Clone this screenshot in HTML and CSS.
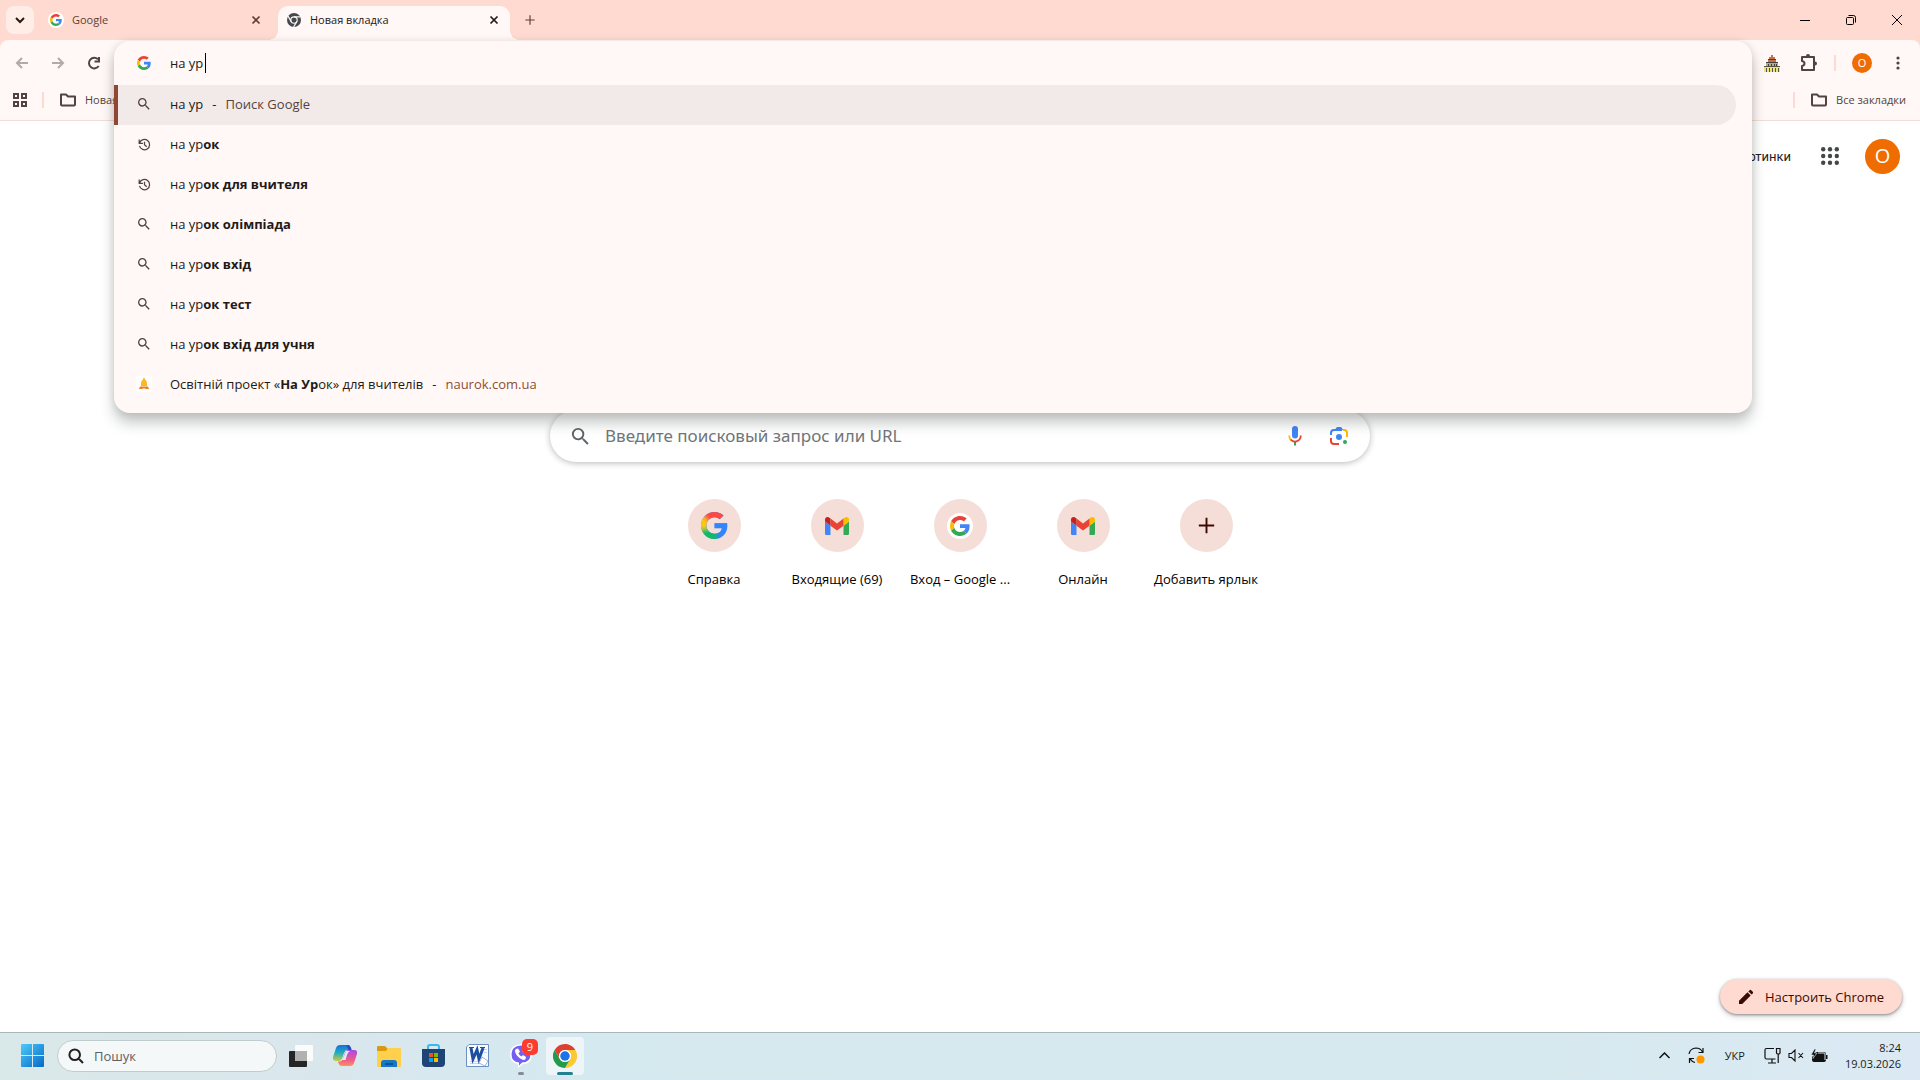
FILE: index.html
```
<!DOCTYPE html>
<html lang="ru">
<head>
<meta charset="utf-8">
<title>Новая вкладка</title>
<link rel="stylesheet" href="styles.css">
</head>
<body>
<svg class="sprite" aria-hidden="true">
  <defs>
    <symbol id="g" viewBox="0 0 48 48">
      <path fill="#EA4335" d="M24 9.5c3.54 0 6.71 1.22 9.21 3.6l6.85-6.85C35.9 2.38 30.47 0 24 0 14.62 0 6.51 5.38 2.56 13.22l7.98 6.19C12.43 13.72 17.74 9.5 24 9.5z"/>
      <path fill="#4285F4" d="M46.98 24.55c0-1.57-.15-3.09-.38-4.55H24v9.02h12.94c-.58 2.96-2.26 5.48-4.78 7.18l7.73 6c4.51-4.18 7.09-10.36 7.09-17.65z"/>
      <path fill="#FBBC05" d="M10.53 28.59c-.48-1.45-.76-2.99-.76-4.59s.27-3.14.76-4.59l-7.98-6.19C.92 16.46 0 20.12 0 24c0 3.88.92 7.54 2.56 10.78l7.97-6.19z"/>
      <path fill="#34A853" d="M24 48c6.48 0 11.93-2.13 15.89-5.81l-7.73-6c-2.15 1.45-4.92 2.3-8.16 2.3-6.26 0-11.57-4.22-13.47-9.91l-7.98 6.19C6.51 42.62 14.62 48 24 48z"/>
    </symbol>
    <clipPath id="g-shape">
      <path d="M24 9.5c3.54 0 6.71 1.22 9.21 3.6l6.85-6.85C35.9 2.38 30.47 0 24 0 10.7 0 0 10.7 0 24s10.7 24 24 24c13.5 0 22.98-9.6 22.98-23.45 0-1.57-.15-3.09-.38-4.55H24v9.02h12.94c-1.2 5.9-6.2 9.47-12.94 9.47-8 0-14.23-6.5-14.23-14.49S16 9.5 24 9.5z"/>
    </clipPath>
    <filter id="soft" x="-20%" y="-20%" width="140%" height="140%"><feGaussianBlur stdDeviation="3.5"/></filter>
    <symbol id="g-new" viewBox="0 0 48 48">
      <g clip-path="url(#g-shape)">
        <rect width="48" height="48" fill="#3186ff"/>
        <g filter="url(#soft)">
          <path fill="#ff4641" d="M-6-6h60v24H14L-6 14z"/>
          <path fill="#ffcc00" d="M-6 10l13-2 10 16-6 6-17 2z"/>
          <path fill="#0ebc5f" d="M-6 32l16-4 14 4 8 22H-6z"/>
        </g>
        <path fill="#3186ff" d="M24 20h24v9H24z"/>
      </g>
    </symbol>
    <symbol id="search" viewBox="0 0 24 24"><path fill="currentColor" d="M15.5 14h-.79l-.28-.27A6.47 6.47 0 0 0 16 9.5 6.5 6.5 0 1 0 9.5 16c1.61 0 3.09-.59 4.23-1.57l.27.28v.79l5 4.99L20.49 19l-4.99-5zm-6 0C7.01 14 5 11.99 5 9.5S7.01 5 9.5 5 14 7.01 14 9.5 11.99 14 9.5 14z"/></symbol>
    <symbol id="history" viewBox="0 0 24 24"><path fill="none" stroke="currentColor" stroke-width="2" d="M4.2 9.5A8.2 8.2 0 1 1 4 14.300M12 7.500v5l3.500 3.200M3.500 4v6h6"/></symbol>
    <symbol id="close" viewBox="0 0 16 16"><path fill="none" stroke="currentColor" stroke-width="2" d="M4 4l8 8M12 4l-8 8"/></symbol>
    <symbol id="plus" viewBox="0 0 24 24"><path fill="none" stroke="currentColor" stroke-width="2" d="M12 4v16M4 12h16"/></symbol>
    <symbol id="arrow" viewBox="0 0 16 16"><path fill="none" stroke="currentColor" stroke-width="2" d="M14 8H3M8 3L3 8l5 5"/></symbol>
    <symbol id="folder" viewBox="0 0 16 14"><path fill="none" stroke="currentColor" stroke-width="2" stroke-linejoin="round" d="M1 11.500v-10h5l2 2h7v8q0 1-1 1H2q-1 0-1-1z"/></symbol>
    <symbol id="gmail" viewBox="0 0 24 18">
      <path fill="#4285F4" d="M1.600 18H5.500V8.700L0 4.500v11.900C0 17.300.7 18 1.600 18z"/>
      <path fill="#34A853" d="M18.500 18h3.900c.9 0 1.600-.7 1.600-1.600V4.500l-5.500 4.200z"/>
      <path fill="#FBBC04" d="M18.500 1.600v7.100L24 4.600V2.500c0-2-2.300-3.200-3.900-2z"/>
      <path fill="#EA4335" d="M5.500 8.700V1.600L12 6.500l6.500-4.900v7.100L12 13.600z"/>
      <path fill="#C5221F" d="M0 2.500v2.100l5.500 4.100V1.600L3.900.5C2.300-.7 0 .5 0 2.500z"/>
    </symbol>
  </defs>
</svg>

<header class="tabstrip">
  <button class="tab-search" aria-label="Поиск вкладок"><svg width="12" height="12" viewBox="0 0 12 12"><path fill="none" stroke="currentColor" stroke-width="2" d="M2 4l4 4 4-4"/></svg></button>
  <div class="tab">
    <span class="favicon"><svg width="12" height="12"><use href="#g"/></svg></span>
    <span class="tab-title">Google</span>
    <button class="tab-close" aria-label="Закрыть"><svg width="14" height="14"><use href="#close"/></svg></button>
  </div>
  <div class="tab active">
    <span class="favicon plain"><svg width="14" height="14" viewBox="0 0 24 24"><circle cx="12" cy="12" r="12" fill="#45494d"/><g fill="none" stroke="#fff8f6" stroke-width="2"><circle cx="12" cy="12" r="5.500"/><path d="M12 6.500h11M7.200 14.800L1.800 5.400M16.800 14.800L11.300 24"/></g></svg></span>
    <span class="tab-title">Новая вкладка</span>
    <button class="tab-close" aria-label="Закрыть"><svg width="14" height="14"><use href="#close"/></svg></button>
  </div>
  <button class="new-tab" aria-label="Новая вкладка"><svg width="14" height="14"><use href="#plus"/></svg></button>
  <div class="window-buttons">
    <button aria-label="Свернуть"><svg width="10" height="10" viewBox="0 0 10 10"><path stroke="#000" d="M0 5.500h10"/></svg></button>
    <button aria-label="Свернуть в окно"><svg width="10" height="10" viewBox="0 0 10 10"><path fill="none" stroke="#000" d="M.5 3.500q0-1 1-1h5q1 0 1 1v5q0 1-1 1h-5q-1 0-1-1zM2.500.5h5q2 0 2 2v5"/></svg></button>
    <button aria-label="Закрыть окно"><svg width="10" height="10" viewBox="0 0 10 10"><path stroke="#000" d="M0 0l10 10M10 0L0 10"/></svg></button>
  </div>
</header>

<div class="chrome">
  <nav class="toolbar">
    <button class="tool muted" aria-label="Назад"><svg width="16" height="16"><use href="#arrow"/></svg></button>
    <button class="tool muted flip" aria-label="Вперёд"><svg width="16" height="16"><use href="#arrow"/></svg></button>
    <button class="tool" aria-label="Обновить"><svg width="16" height="16" viewBox="0 0 16 16"><path fill="none" stroke="currentColor" stroke-width="2" d="M12.700 11A5.300 5.300 0 1 1 12 4.300M13 2v4.500H8.500"/></svg></button>
    <span class="spacer"></span>
    <button class="tool" aria-label="Расширение"><svg width="16" height="17" viewBox="0 0 16 17"><path fill="#f2e27a" d="M0 11h16v6H0z"/><path fill="#554" d="M0 11h16v1H0zM2 13h1v4H2zM5 13h1v4H5zM8 13h1v4H8zM11 13h1v4h-1zM14 13h1v4h-1z"/><path fill="#b9a98f" d="M2 7h12v4H2z"/><path fill="#443e3a" d="M2 7h12v1H2zM4 9h1v2H4zM7 9h1v2H7zM10 9h1v2h-1zM12 9h1v2h-1zM4 4h8v1H4z"/><path fill="#c86f4b" d="M4 5h8v2H4zM5 2h6v2H5zM7 0h2v2H7z"/></svg></button>
    <button class="tool" aria-label="Расширения"><svg width="18" height="18" viewBox="0 0 18 18"><path fill="none" stroke="currentColor" stroke-width="2" stroke-linejoin="round" d="M3 3h12v13H3v-4q2.500-.5 2.500-2.500T3 7z"/><path fill="currentColor" d="M7 2q0-2 2-2t2 2zM16 7.500q2 0 2 2t-2 2z"/></svg></button>
    <span class="divider"></span>
    <button class="tool" aria-label="Профиль"><span class="profile">О</span></button>
    <button class="tool" aria-label="Меню"><svg width="4" height="14" viewBox="0 0 4 14" fill="currentColor"><circle cx="2" cy="2" r="1.600"/><circle cx="2" cy="7" r="1.600"/><circle cx="2" cy="12" r="1.600"/></svg></button>
  </nav>
  <nav class="bookmarks">
    <button class="apps" aria-label="Группы вкладок"><svg width="14" height="14" viewBox="0 0 14 14" fill="none" stroke="currentColor" stroke-width="2"><path d="M1 1h4v4H1zM9 1h4v4H9zM1 9h4v4H1zM9 9h4v4H9z"/></svg></button>
    <span class="divider"></span>
    <a class="bookmark" href="#"><svg width="16" height="14"><use href="#folder"/></svg>Новая папка</a>
    <span class="spacer"></span>
    <span class="divider"></span>
    <a class="bookmark" href="#"><svg width="16" height="14"><use href="#folder"/></svg>Все закладки</a>
  </nav>
</div>

<section class="omnibox" aria-label="Адресная строка">
  <div class="omnibox-input">
    <span class="row-icon"><svg width="14" height="14"><use href="#g"/></svg></span>
    <input class="query" type="text" value="на ур" size="4" aria-label="Адрес или запрос">
  </div>
  <ul class="suggestions">
    <li class="selected"><span class="row-icon"><svg width="16" height="16"><use href="#search"/></svg></span><span>на ур<span class="dash">-</span><span class="hint">Поиск Google</span></span></li>
    <li><span class="row-icon"><svg width="15" height="15"><use href="#history"/></svg></span><span>на ур<b>ок</b></span></li>
    <li><span class="row-icon"><svg width="15" height="15"><use href="#history"/></svg></span><span>на ур<b>ок для вчителя</b></span></li>
    <li><span class="row-icon"><svg width="16" height="16"><use href="#search"/></svg></span><span>на ур<b>ок олімпіада</b></span></li>
    <li><span class="row-icon"><svg width="16" height="16"><use href="#search"/></svg></span><span>на ур<b>ок вхід</b></span></li>
    <li><span class="row-icon"><svg width="16" height="16"><use href="#search"/></svg></span><span>на ур<b>ок тест</b></span></li>
    <li><span class="row-icon"><svg width="16" height="16"><use href="#search"/></svg></span><span>на ур<b>ок вхід для учня</b></span></li>
    <li><span class="row-icon"><span class="site-icon"><svg width="10" height="12" viewBox="0 0 10 12"><path fill="#fbb823" d="M5 0q1 0 1.200 1.500Q8 3 8 6.500V8H2V6.500Q2 3 3.800 1.500 4 0 5 0z"/><path fill="#f07c1b" d="M1 8.500h8l1 2.500H7q-2-1.500-4 0H0z"/></svg></span></span><span>Освітній проект «<b>На Ур</b>ок» для вчителів<span class="dash">-</span><span class="url">naurok.com.ua</span></span></li>
  </ul>
</section>

<main class="ntp">
  <div class="ntp-header">
    <a class="images-link" href="#">Картинки</a>
    <button class="grid-button" aria-label="Приложения Google"><svg width="18" height="18" viewBox="0 0 18 18" fill="#444746"><circle cx="2.200" cy="2.200" r="2.200"/><circle cx="9" cy="2.200" r="2.200"/><circle cx="15.800" cy="2.200" r="2.200"/><circle cx="2.200" cy="9" r="2.200"/><circle cx="9" cy="9" r="2.200"/><circle cx="15.800" cy="9" r="2.200"/><circle cx="2.200" cy="15.800" r="2.200"/><circle cx="9" cy="15.800" r="2.200"/><circle cx="15.800" cy="15.800" r="2.200"/></svg></button>
    <button class="account" aria-label="Аккаунт">О</button>
  </div>
  <form class="searchbox">
    <svg class="lens" width="23" height="23"><use href="#search"/></svg>
    <input type="text" placeholder="Введите поисковый запрос или URL" aria-label="Поиск">
    <button type="button" aria-label="Голосовой поиск"><svg width="14" height="20" viewBox="0 0 14 20"><rect x="4" y="0" width="6" height="12.500" rx="3" fill="#4285f4"/><path fill="#34a853" d="M6 15h2v4.500H6z"/><path fill="none" stroke="#fbbc04" stroke-width="1.800" d="M1.200 9.500q0 3 2 4.600"/><path fill="none" stroke="#ea4335" stroke-width="1.800" d="M2.600 13.600q4.400 4.200 8.800 0Q12.800 12 12.800 9.500"/></svg></button>
    <button type="button" aria-label="Поиск по картинке"><svg width="18" height="18" viewBox="0 0 18 18" fill="none" stroke-width="2"><path stroke="#4285f4" d="M1 8V6q0-3 3-3h8"/><path fill="#4285f4" d="M5 3q1-3 2.500-3h3Q12 0 13 3z"/><path stroke="#fbbc04" d="M13 3h1q3 0 3 3v4"/><path stroke="#ea4335" d="M1 11v3q0 3 3 3h5"/><circle cx="9" cy="10" r="3" fill="#4285f4"/><circle cx="15" cy="15" r="2" fill="#34a853"/></svg></button>
  </form>
  <div class="shortcuts">
    <a class="shortcut" href="#"><span class="disc"><svg width="27" height="27"><use href="#g-new"/></svg></span><span class="label">Справка</span></a>
    <a class="shortcut" href="#"><span class="disc"><svg width="24" height="18"><use href="#gmail"/></svg></span><span class="label">Входящие (69)</span></a>
    <a class="shortcut" href="#"><span class="disc"><span class="white-disc"><svg width="20" height="20"><use href="#g"/></svg></span></span><span class="label">Вход – Google ...</span></a>
    <a class="shortcut" href="#"><span class="disc"><svg width="24" height="18"><use href="#gmail"/></svg></span><span class="label">Онлайн</span></a>
    <button class="shortcut"><span class="disc"><svg width="23" height="23"><use href="#plus"/></svg></span><span class="label">Добавить ярлык</span></button>
  </div>
  <button class="customize"><svg width="16" height="16" viewBox="0 0 16 16" fill="currentColor"><path d="M1 15v-3.200l8.500-8.500 3.200 3.200L4.200 15zM10.400 2.400l1.200-1.200q.8-.7 1.600 0l1.600 1.600q.7.800 0 1.600l-1.200 1.200z"/></svg>Настроить Chrome</button>
</main>

<footer class="taskbar">
  <button class="start" aria-label="Пуск"><svg width="23" height="23" viewBox="0 0 23 23"><defs><linearGradient id="win" x1="0" y1="0" x2="1" y2="1"><stop offset="0" stop-color="#4ccbfa"/><stop offset="1" stop-color="#0669c8"/></linearGradient></defs><path fill="url(#win)" d="M1 0h10v11H0V1q0-1 1-1zM12 0h10q1 0 1 1v10H12zM0 12h11v11H1q-1 0-1-1zM12 12h11v10q0 1-1 1H12z"/></svg></button>
  <label class="task-search"><svg width="16" height="16" viewBox="0 0 16 16"><path fill="none" stroke="#222" stroke-width="2" d="M10.800 10.800L15 15M12 6.800a5.300 5.300 0 1 1-10.600 0 5.300 5.300 0 0 1 10.600 0z"/></svg><input type="text" placeholder="Пошук" aria-label="Пошук"></label>
  <div class="task-apps">
    <button aria-label="Подання завдань"><svg width="24" height="22" viewBox="0 0 24 22"><rect y="6" width="18" height="16" rx="1" fill="#262626"/><rect x="6" width="18" height="16" rx="1" fill="#fbfbfb"/><path fill="#b1b1b1" d="M6 6h12v10H6z"/></svg></button>
    <button aria-label="Copilot"><svg width="24" height="23" viewBox="0 0 24 23"><defs><linearGradient id="cp1" x1="0" y1="0" x2="0" y2="1"><stop offset="0" stop-color="#1672dc"/><stop offset=".5" stop-color="#25aebc"/><stop offset="1" stop-color="#c9cc3c"/></linearGradient><linearGradient id="cp2" x1="0" y1="0" x2="0" y2="1"><stop offset="0" stop-color="#a84be4"/><stop offset=".6" stop-color="#ec5a92"/><stop offset="1" stop-color="#fb9352"/></linearGradient></defs><path fill="url(#cp1)" d="M7 1h8q2 0 3 3l.500 2H14q-2 0-3 3l-2 6q-1 2-3 2H3q-4 0-3-4L3 4q1-3 4-3z"/><path fill="url(#cp2)" d="M17 22H9q-3 0-4-4.500h2q2 0 3-3l2-6q1-2.500 3-2.500h6q4 0 3 4l-3 9q-1 3-4 3z"/><path fill="#dcebf0" d="M13 7h4q-2 1-3 4l-1.500 5H8q2-1 3-4z"/><path fill="#1b50c8" d="M13 1h2q2 0 3 3l.500 2h-3q-1-4-2.500-5z"/></svg></button>
    <button aria-label="Провідник"><svg width="24" height="22" viewBox="0 0 24 22"><path fill="#d79a12" d="M0 2q0-1 1-1h7l3 3v3H0z"/><path fill="#ffd04c" d="M0 6h9l2-3h12q1 0 1 1v17q0 1-1 1H1q-1 0-1-1z"/><path fill="#1677c9" d="M4 22v-4q0-3 3-3h10q3 0 3 3v4z"/><path fill="#0b559d" d="M8 18h8v2H8z"/></svg></button>
    <button aria-label="Microsoft Store"><svg width="23" height="23" viewBox="0 0 23 23"><path fill="none" stroke="#38b8ee" stroke-width="2" d="M6 6V3q0-2 2-2h7q2 0 2 2v3"/><path fill="#1e4475" d="M0 5h23v14q0 4-4 4H4q-4 0-4-4z"/><path fill="#f25022" d="M7 9h4v4H7z"/><path fill="#7fba00" d="M12 9h4v4h-4z"/><path fill="#00a4ef" d="M7 14h4v4H7z"/><path fill="#ffb900" d="M12 14h4v4h-4z"/></svg></button>
    <button aria-label="Word"><svg width="23" height="23" viewBox="0 0 23 23"><path fill="#f7fafe" stroke="#6d8fc0" d="M3 .5h19.500v22H.5V3z"/><path fill="#c5d7ef" d="M4 17h9v1H4zM4 19h14v1H4zM18 5h3v1h-3zM18 8h3v1h-3z"/><path fill="none" stroke="#1d4fa0" stroke-width="3" d="M5 4l2 11 4-9 2 9 4-11"/><path fill="none" stroke="#1d4fa0" d="M3 3.500h5M14 3.500h5"/><path fill="#fff" stroke="#9db5d9" d="M16 13l6 4-3 5-6-3z"/></svg></button>
    <button class="viber" aria-label="Viber"><svg width="22" height="24" viewBox="0 0 22 24"><path fill="#fff" d="M11 0q11 0 11 10t-9 10l-5 4v-4Q0 19 0 10T11 0z"/><path fill="#7360f2" d="M11 1.500q9.500 0 9.500 8.500T12 18.500L9 21.500v-3Q1.500 18 1.500 10t9.500-8.500z"/><path fill="#fff" d="M6 5l2-.5 2 3-1.500 2q1 2 3 3L13 11l3 2-.5 2q-1 1.500-3.500.5Q6.500 13 5 7.500 4.800 5.800 6 5z"/><path fill="none" stroke="#fff" stroke-width="1.200" d="M12 4.500q4.500.5 4.500 5.500M12 7q2 .3 2 2.500"/></svg><span class="badge">9</span></button>
    <button class="current" aria-label="Chrome"><svg width="24" height="24" viewBox="0 0 48 48"><path fill="#de3f33" d="M24 0c8.900 0 16.600 4.800 20.800 12H24a12 12 0 0 0-10.400 18L3.200 12A24 24 0 0 1 24 0z"/><path fill="#fcc934" d="M44.800 12A24 24 0 0 1 24 48l10.400-18A12 12 0 0 0 24 12z"/><path fill="#249a4b" d="M3.200 12l10.400 18a12 12 0 0 0 20.800 0L24 48A24 24 0 0 1 3.200 12z"/><circle cx="24" cy="24" r="12" fill="#fff"/><circle cx="24" cy="24" r="9.500" fill="#1a73e8"/></svg></button>
  </div>
  <div class="tray">
    <button aria-label="Приховані піктограми"><svg width="11" height="7" viewBox="0 0 11 7"><path fill="none" stroke="#111" stroke-width="1.500" d="M.5 6l5-5 5 5"/></svg></button>
    <button class="update" aria-label="Оновлення"><svg width="17" height="17" viewBox="0 0 17 17"><path fill="none" stroke="#111" stroke-width="1.200" d="M1 7q1-5.500 7-6 4.500 0 6.500 4M15 1v4.500h-4.500M7 15.500q-3-.5-5-4M1.500 16v-4.500H6"/><circle cx="12.500" cy="12.500" r="4" fill="#ff9800"/></svg></button>
    <button class="lang">УКР</button>
    <button class="status" aria-label="Мережа, звук, батарея">
      <svg width="17" height="17" viewBox="0 0 17 17" fill="none" stroke="#111" stroke-width="1.200"><path d="M10 1.500H2.500q-1.500 0-1.500 1.500v7.500Q1 12 2.500 12h9M8 12v4M4 16h8M12.500 1.500h3.500V6q0 1-1.700 1T12.500 6zM14.200 7v9"/></svg>
      <svg width="16" height="13" viewBox="0 0 16 13" fill="none" stroke="#111" stroke-width="1.100"><path d="M1 4.500h2.500L7 1v11L3.500 8.500H1zM10.500 4l4.500 5M15 4l-4.500 5"/></svg>
      <svg width="17" height="14" viewBox="0 0 17 14"><path fill="#111" d="M5 3h8q2 0 2 2v1h1.500v4H15v1q0 2-2 2H3q-2 0-2-2V8z"/><path fill="none" stroke="#dcebf4" d="M7 4h6q1 0 1 1v6"/><path fill="#111" stroke="#dcebf4" stroke-width=".6" d="M3.500 0L0 6h2.500L2 9.500 6 4H3.500L5 0z"/></svg>
    </button>
    <button class="clock"><span>8:24</span><span>19.03.2026</span></button>
  </div>
</footer>
</body>
</html>
```
FILE: styles.css
```
* { box-sizing: border-box; }

body {
  margin: 0;
  min-height: 100vh;
  display: flex;
  flex-direction: column;
  position: relative;
  background: #fff;
  color: #231917;
  font: 13px/20px "Open Sans", "Noto Sans", sans-serif;
}

button {
  border: 0;
  padding: 0;
  background: none;
  color: inherit;
  font: inherit;
  display: flex;
  align-items: center;
  justify-content: center;
}

input {
  border: 0;
  padding: 0;
  background: none;
  color: inherit;
  font: inherit;
  outline: 0;
  min-width: 0;
}

a { color: inherit; text-decoration: none; }
svg { display: block; flex: none; }
.sprite { position: absolute; width: 0; height: 0; }
.spacer { flex: 1; }

/* Tab strip */
.tabstrip {
  display: flex;
  align-items: center;
  height: 40px;
  padding-left: 6px;
  background: #ffdad0;
  font-size: 11px;
}

.tab-search {
  width: 28px;
  height: 28px;
  border-radius: 8px;
  background: #ffede8;
}

.tab {
  display: flex;
  align-items: center;
  align-self: flex-end;
  gap: 8px;
  width: 232px;
  height: 34px;
  margin-left: 6px;
  padding: 0 9px 6px 8px;
  color: #5d4037;
}

.tab.active {
  position: relative;
  border-radius: 10px 10px 0 0;
  background: #fff8f6;
  color: #231917;
}

.tab.active::before,
.tab.active::after {
  content: "";
  position: absolute;
  bottom: 0;
  width: 10px;
  height: 10px;
}

.tab.active::before {
  right: 100%;
  background: radial-gradient(circle at 0 0, transparent 10px, #fff8f6 10px);
}

.tab.active::after {
  left: 100%;
  background: radial-gradient(circle at 100% 0, transparent 10px, #fff8f6 10px);
}

.favicon {
  display: grid;
  place-items: center;
  width: 16px;
  height: 16px;
  border-radius: 50%;
  background: #fff;
}

.favicon.plain { background: none; }
.tab-title { flex: 1; }
.new-tab { width: 40px; color: #5d4037; }

.window-buttons { display: flex; margin-left: auto; }
.window-buttons button { width: 46px; height: 40px; }

/* Toolbar and bookmarks */
.chrome {
  border-bottom: 1px solid #f5ddd7;
  background: linear-gradient(#ffdad0 10px, #fff8f6 10px);
  color: #534340;
}

.toolbar {
  display: flex;
  align-items: center;
  height: 46px;
  padding: 0 4px;
  border-radius: 8px 8px 0 0;
  background: #fff8f6;
}

.tool { width: 36px; height: 34px; }
.tool.muted { color: #b3a9a6; }
.tool.flip { transform: scaleX(-1); }

.divider {
  width: 2px;
  height: 16px;
  margin: 0 8px;
  background: #ffdad0;
}

.profile {
  width: 20px;
  height: 20px;
  border-radius: 50%;
  background: #ef6c00;
  color: #fff;
  font-size: 11px;
  line-height: 20px;
}

.bookmarks {
  display: flex;
  align-items: center;
  height: 34px;
  padding: 0 14px 6px 13px;
  font-size: 11px;
}

.bookmarks .divider { margin: 0 16px 0 15px; }
.bookmark { display: flex; align-items: center; gap: 9px; }

/* Address bar with suggestions */
.omnibox {
  position: absolute;
  z-index: 2;
  top: 41px;
  left: 114px;
  right: 168px;
  padding-bottom: 8px;
  border-radius: 16px;
  background: #fff8f6;
  box-shadow: 0 10px 14px rgba(30, 40, 40, .26), 0 0 8px rgba(0, 0, 0, .1);
}

.omnibox-input {
  display: flex;
  align-items: center;
  height: 44px;
}

.row-icon {
  display: grid;
  place-items: center;
  flex: none;
  width: 20px;
  margin: 0 16px 0 20px;
}

.query { width: 36px; border-right: 1px solid #000; }

.suggestions {
  margin: 0;
  padding: 0;
  list-style: none;
}

.suggestions li {
  display: flex;
  align-items: center;
  height: 40px;
  margin-right: 16px;
  padding-bottom: 2px;
}

.suggestions .row-icon { color: #534340; }

.suggestions .selected {
  border-radius: 0 20px 20px 0;
  background: #f2eae8;
  box-shadow: inset 4px 0 #8f4633;
}

.dash { margin: 0 9px; }
.hint { color: #534340; }
.url { color: #8f4c38; }

.site-icon {
  display: grid;
  place-items: center;
  width: 16px;
  height: 16px;
  border-radius: 2px;
  background: #fff;
}

/* New tab page */
.ntp {
  flex: 1;
  display: flex;
  flex-direction: column;
  align-items: center;
  padding-bottom: 18px;
}

.ntp-header {
  display: flex;
  align-items: center;
  align-self: stretch;
  justify-content: flex-end;
  height: 70px;
  padding-right: 20px;
}

.images-link { color: #1f1f1f; font: 13px "Roboto", sans-serif; }
.grid-button { width: 36px; margin: 0 17px 0 21px; }

.account {
  width: 35px;
  height: 35px;
  border-radius: 50%;
  background: #ef6c00;
  color: #fff;
  font-size: 20px;
}

.searchbox {
  display: flex;
  align-items: center;
  width: 820px;
  max-width: 90%;
  height: 52px;
  margin-top: 219px;
  padding: 0 19px;
  border-radius: 26px;
  background: #fff;
  box-shadow: 0 1px 6px rgba(32, 33, 36, .32);
  color: #5f6368;
}

.searchbox input {
  flex: 1;
  margin-left: 13px;
  font: 17px/24px "Noto Sans", sans-serif;
}

.searchbox input::placeholder { color: #70757a; opacity: 1; }
.searchbox button { width: 24px; margin-left: 20px; }

.shortcuts {
  display: flex;
  margin-top: 37px;
  gap: 11px;
}

.shortcut {
  display: flex;
  flex-direction: column;
  align-items: center;
  gap: 17px;
  width: 112px;
  color: #000;
}

.disc {
  display: grid;
  place-items: center;
  width: 53px;
  height: 53px;
  border-radius: 50%;
  background: #f5ded8;
  color: #3a0b01;
}

.white-disc {
  display: grid;
  place-items: center;
  width: 26px;
  height: 26px;
  border-radius: 50%;
  background: #fff;
}

.label { white-space: nowrap; }

.customize {
  align-self: flex-end;
  gap: 11px;
  height: 35px;
  margin: auto 18px 0 0;
  padding: 0 18px;
  border-radius: 18px;
  background: #ffdad0;
  box-shadow: 0 1px 3px rgba(0, 0, 0, .4), 0 3px 6px rgba(0, 0, 0, .14);
  color: #3a0b01;
}

/* Taskbar */
.taskbar {
  display: flex;
  align-items: center;
  height: 48px;
  padding: 0 19px 2px 10px;
  border-top: 1px solid #a9b6b9;
  background: linear-gradient(90deg, #d9e8e8, #dae7ed 15%, #d5e9f0 30%, #d5e9ee 75%, #dce9f4);
  color: #1b1b1b;
}

.start { width: 44px; height: 40px; }

.task-search {
  display: flex;
  align-items: center;
  gap: 10px;
  width: 220px;
  height: 32px;
  margin: 0 2px 0 3px;
  padding: 0 10px;
  border: 1px solid #c0cdcf;
  border-radius: 16px;
  background: #f4f8f9;
}

.task-search input { flex: 1; }
.task-search input::placeholder { color: #5c6062; opacity: 1; }

.task-apps { display: flex; gap: 6px; padding-left: 3px; }

.task-apps button {
  position: relative;
  width: 38px;
  height: 38px;
  border-radius: 4px;
}

.task-apps .current { background: #edf5f9; }

.viber::after,
.current::after {
  content: "";
  position: absolute;
  bottom: 0;
  width: 6px;
  height: 3px;
  border-radius: 2px;
  background: #858d91;
}

.current::after { width: 16px; background: #22808f; }

.badge {
  position: absolute;
  top: 2px;
  right: 2px;
  width: 16px;
  height: 16px;
  border-radius: 5px;
  background: #ff3b30;
  color: #fff;
  font-size: 11px;
  line-height: 16px;
}

.tray {
  display: flex;
  align-items: center;
  margin-left: auto;
  font-size: 11px;
}

.tray button { height: 40px; }
.update { margin: 0 20px 0 18px; }
.status { gap: 7px; margin: 0 17px 0 19px; }

.tray .clock {
  flex-direction: column;
  align-items: flex-end;
  line-height: 16px;
}
```
